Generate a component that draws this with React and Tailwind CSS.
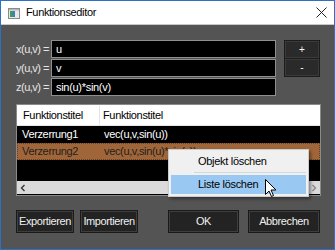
import React from "react";

const font = { fontFamily: '"Liberation Sans", Arial, sans-serif' };

function Btn({ w, children, cls = "" }) {
  return (
    <div
      className={`h-[23px] flex items-center justify-center bg-[#232323] border border-[#1a1a1a] shadow-[inset_0_0_0_1px_#3e3e3e] text-[11px] tracking-[-0.4px] text-[#f0f0f0] ${cls}`}
      style={{ width: w }}
    >
      {children}
    </div>
  );
}

export default function App() {
  return (
    <div
      className="w-[335px] h-[250px] border border-[#2f6fc4] bg-[#545454] flex flex-col overflow-hidden relative"
      style={font}
    >
      {/* Title bar */}
      <div className="h-[24px] bg-white flex items-center shrink-0 border-b border-[#c9c9c9]">
        <svg width="12" height="11" viewBox="0 0 12 11" className="ml-[7px] mt-[1px]">
          <rect x="0.5" y="0.5" width="11" height="10" fill="#e8e8e8" stroke="#8a8a8a" />
          <rect x="1" y="1" width="10" height="1.5" fill="#b8b8b8" />
          <rect x="2" y="3" width="3" height="6" fill="#3f9a5c" />
          <rect x="5" y="3" width="2" height="6" fill="#3d7fc4" />
        </svg>
        <span className="ml-[6px] text-[11px] tracking-[-0.35px] text-black">Funktionseditor</span>
        <svg width="11" height="11" viewBox="0 0 11 11" className="ml-auto mr-[7px]">
          <path d="M0.5 0.5 L10.5 10.5 M10.5 0.5 L0.5 10.5" stroke="#222" strokeWidth="1" />
        </svg>
      </div>

      {/* Body */}
      <div className="flex-1 flex flex-col pl-[15px] pr-[14px]">
        {/* Function inputs */}
        <div className="mt-[15px] flex">
          <div className="flex flex-col gap-[1px]">
            {[
              ["x(u,v) =", "u"],
              ["y(u,v) =", "v"],
              ["z(u,v) =", "sin(u)*sin(v)"],
            ].map(([l, v]) => (
              <div key={l} className="flex items-center h-[18px]">
                <span className="w-[32px] text-right text-[11px] tracking-[-0.5px] text-[#e6e6e6] whitespace-nowrap">{l}</span>
                <div className="ml-[3px] w-[225px] h-[18px] bg-black border border-[#8f8f8f] flex items-center pl-[4px] text-[11px] tracking-[-0.3px] text-white">
                  {v}
                </div>
              </div>
            ))}
          </div>
          <div className="ml-[8px] flex flex-col">
            <div className="w-[36px] h-[19px] bg-[#2a2a2a] border border-[#1c1c1c] shadow-[inset_0_0_0_1px_#3a3a3a] flex items-center justify-center text-[10px] text-white leading-none">
              +
            </div>
            <div className="w-[36px] h-[19px] -mt-px bg-[#2a2a2a] border border-[#1c1c1c] shadow-[inset_0_0_0_1px_#3a3a3a] flex items-center justify-center text-[10px] text-white leading-none">
              -
            </div>
          </div>
        </div>

        {/* Table */}
        <div className="mt-[8px] w-[305px] h-[92px] border border-[#8a8a8a] bg-black flex flex-col overflow-hidden text-[11px] tracking-[-0.35px]">
          <div className="h-[21px] bg-white flex items-center text-black border-b border-[#e5e5e5] pt-[1px]">
            <div className="w-[83px] pl-[6px] h-full flex items-center border-r border-[#e5e5e5]">Funktionstitel</div>
            <div className="pl-[3px]">Funktionstitel</div>
          </div>
          <div className="h-[17px] flex items-center text-white">
            <div className="w-[83px] pl-[5px]">Verzerrung1</div>
            <div className="pl-[4px]">vec(u,v,sin(u))</div>
          </div>
          <div className="h-[17px] flex items-center text-[#1e1e1e] bg-[#a0663a] border border-dotted border-[#6b4020]">
            <div className="w-[82px] pl-[4px]">Verzerrung2</div>
            <div className="pl-[4px] whitespace-nowrap">vec(u,v,sin(u)*sin(v))</div>
          </div>
          <div className="flex-1" />
          <div className="h-[13px] bg-[#dadada] flex items-center justify-between px-[3px] mb-[1px]">
            <svg width="6" height="8" viewBox="0 0 6 8">
              <path d="M4.5 1 L1.5 4 L4.5 7" stroke="#333" strokeWidth="1.3" fill="none" />
            </svg>
            <svg width="6" height="8" viewBox="0 0 6 8">
              <path d="M1.5 1 L4.5 4 L1.5 7" stroke="#888" strokeWidth="1.3" fill="none" />
            </svg>
          </div>
        </div>

        {/* Bottom buttons */}
        <div className="mt-[14px] flex">
          <Btn w="58px">Exportieren</Btn>
          <Btn w="58px" cls="ml-[6px]">Importieren</Btn>
          <Btn w="71px" cls="ml-[30px]">OK</Btn>
          <Btn w="72px" cls="ml-[9px]">Abbrechen</Btn>
        </div>
      </div>

      {/* Context menu */}
      <div className="absolute left-[167px] top-[148px] w-[141px] h-[48px] bg-[#f0f0f0] border border-[#cccccc] shadow-[2px_2px_3px_rgba(0,0,0,0.4)] flex flex-col text-[11px] tracking-[-0.3px] text-black">
        <div className="h-[22px] flex items-center pl-[29px] pt-[1px]">Objekt löschen</div>
        <div className="ml-[25px] mr-[2px] h-px bg-[#d7d7d7]" />
        <div className="mt-[2px] mx-[2px] h-[19px] bg-[#99c9f2] flex items-center pl-[27px]">Liste löschen</div>
      </div>

      {/* Cursor */}
      <svg width="12" height="19" viewBox="0 0 12 19" className="absolute left-[264px] top-[178px]">
        <path d="M0.5 0.5 L0.5 15.5 L4 12 L6.5 17.5 L8.5 16.5 L6 11 L11 11 Z" fill="#fff" stroke="#000" strokeWidth="1" strokeLinejoin="round" />
      </svg>
    </div>
  );
}
